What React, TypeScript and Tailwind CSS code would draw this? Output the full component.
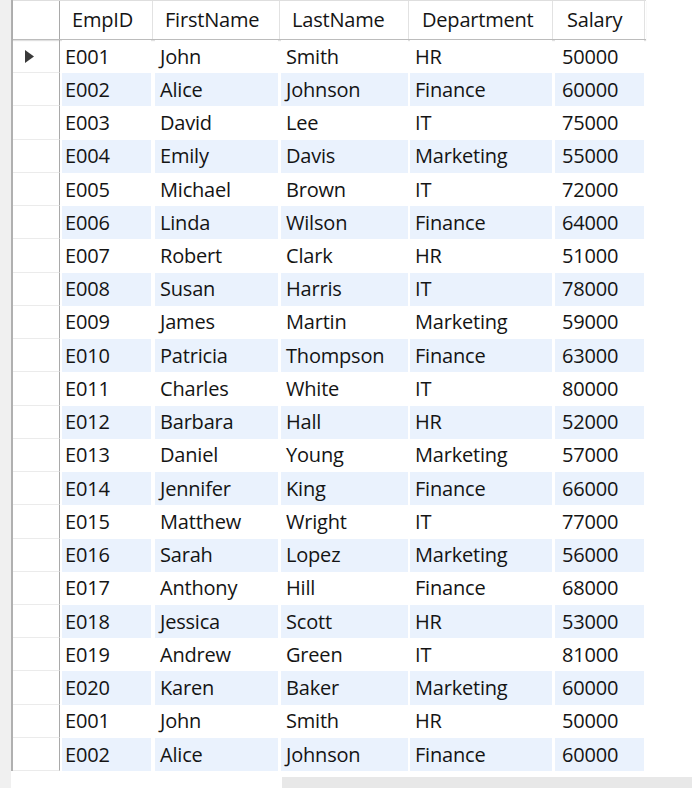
import React from 'react';

const ROWS: [string, string, string, string, number][] = [
  ['E001', 'John', 'Smith', 'HR', 50000],
  ['E002', 'Alice', 'Johnson', 'Finance', 60000],
  ['E003', 'David', 'Lee', 'IT', 75000],
  ['E004', 'Emily', 'Davis', 'Marketing', 55000],
  ['E005', 'Michael', 'Brown', 'IT', 72000],
  ['E006', 'Linda', 'Wilson', 'Finance', 64000],
  ['E007', 'Robert', 'Clark', 'HR', 51000],
  ['E008', 'Susan', 'Harris', 'IT', 78000],
  ['E009', 'James', 'Martin', 'Marketing', 59000],
  ['E010', 'Patricia', 'Thompson', 'Finance', 63000],
  ['E011', 'Charles', 'White', 'IT', 80000],
  ['E012', 'Barbara', 'Hall', 'HR', 52000],
  ['E013', 'Daniel', 'Young', 'Marketing', 57000],
  ['E014', 'Jennifer', 'King', 'Finance', 66000],
  ['E015', 'Matthew', 'Wright', 'IT', 77000],
  ['E016', 'Sarah', 'Lopez', 'Marketing', 56000],
  ['E017', 'Anthony', 'Hill', 'Finance', 68000],
  ['E018', 'Jessica', 'Scott', 'HR', 53000],
  ['E019', 'Andrew', 'Green', 'IT', 81000],
  ['E020', 'Karen', 'Baker', 'Marketing', 60000],
  ['E001', 'John', 'Smith', 'HR', 50000],
  ['E002', 'Alice', 'Johnson', 'Finance', 60000],
];

// outer width, inner inset classes, text padding
const COLS = [
  { name: 'EmpID', outer: 'w-[93px] pl-[2px] pr-[2px]', text: 'pl-[3px]', head: 'w-[93px] pl-[12px]' },
  { name: 'FirstName', outer: 'w-[127px] pl-[2px] pr-[2px]', text: 'pl-[5px]', head: 'w-[127px] pl-[12px]' },
  { name: 'LastName', outer: 'w-[129px] pl-[1px] pr-[1px]', text: 'pl-[5px]', head: 'w-[129px] pl-[12px]' },
  { name: 'Department', outer: 'w-[144px] pl-[1px] pr-[1px]', text: 'pl-[5px]', head: 'w-[144px] pl-[13px]' },
  { name: 'Salary', outer: 'w-[92px] pl-[2px] pr-[1px]', text: 'pl-[7px]', head: 'w-[92px] pl-[14px]' },
];

const App = () => {
  return (
    <div
      className="w-[692px] h-[788px] flex bg-white overflow-hidden text-[20px] text-[#141414]"
      style={{ fontFamily: '"Open Sans", "DejaVu Sans", sans-serif' }}
    >
      {/* left gutter */}
      <div className="w-[11px] h-full bg-[#f0f0f0] shrink-0" />

      <div className="flex flex-col flex-1">
        <div className="flex flex-col w-[635px] border-l-2 border-[#b0b0b0]">
          {/* header */}
          <div className="flex h-[40px] border-t border-[#dedede] border-b border-b-[#bcbcbc] shadow-[0_1px_1px_rgba(0,0,0,0.12)]">
            <div className="w-[47px] border-r border-[#a9a9a9] shrink-0" />
            {COLS.map(c => (
              <div key={c.name} className={`${c.head} shrink-0 flex items-center border-r border-[#e2e2e2] tracking-[-0.2px]`}>
                {c.name}
              </div>
            ))}
          </div>

          {/* rows */}
          {ROWS.map((r, i) => (
            <div key={i} className="flex h-[33.24px]">
              <div className="w-[47px] shrink-0 border-r border-[#a9a9a9] border-b border-b-[#ebebeb] flex items-center pl-[12px]">
                {i === 0 && (
                  <svg width="9" height="13" viewBox="0 0 9 13">
                    <path d="M0 0 L9 6.5 L0 13 Z" fill="#3a3a3a" />
                  </svg>
                )}
              </div>
              {COLS.map((c, j) => (
                <div key={j} className={`${c.outer} shrink-0 h-full`}>
                  <div className={`h-full flex items-center tracking-[-0.2px] ${c.text} ${i % 2 === 1 ? 'bg-[#eaf2fd]' : 'bg-white'}`}>
                    {r[j]}
                  </div>
                </div>
              ))}
            </div>
          ))}
        </div>

        {/* bottom scrollbar */}
        <div className="flex-1 flex items-end">
          <div className="ml-[271px] w-[410px] h-[11px] bg-[#e8e8e8]" />
        </div>
      </div>
    </div>
  );
};

export default App;
